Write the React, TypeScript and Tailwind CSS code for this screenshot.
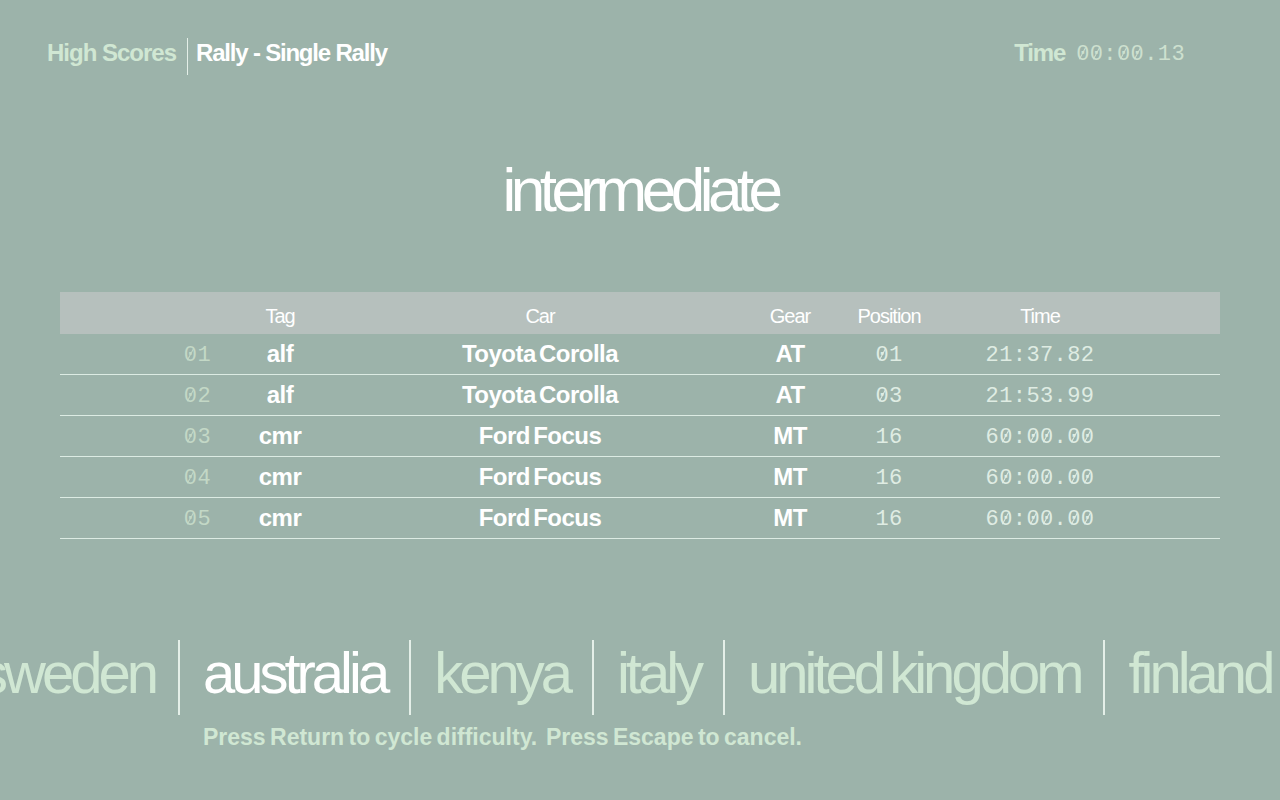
import React from "react";

const sans = { fontFamily: '"Liberation Sans", Arial, sans-serif' };
const mono = { fontFamily: '"Liberation Mono", "DejaVu Sans Mono", monospace' };

const rows = [
  { n: "01", tag: "alf", car: "Toyota Corolla", gear: "AT", pos: "01", time: "21:37.82" },
  { n: "02", tag: "alf", car: "Toyota Corolla", gear: "AT", pos: "03", time: "21:53.99" },
  { n: "03", tag: "cmr", car: "Ford Focus", gear: "MT", pos: "16", time: "60:00.00" },
  { n: "04", tag: "cmr", car: "Ford Focus", gear: "MT", pos: "16", time: "60:00.00" },
  { n: "05", tag: "cmr", car: "Ford Focus", gear: "MT", pos: "16", time: "60:00.00" },
];

const countries = [
  { name: "sweden", active: false },
  { name: "australia", active: true },
  { name: "kenya", active: false },
  { name: "italy", active: false },
  { name: "united kingdom", active: false },
  { name: "finland", active: false },
];

function Lcd({ text, className }: { text: string; className: string }) {
  return (
    <span className={`relative top-[2px] inline-block leading-none tracking-[0.4px] ${className}`} style={mono}>
      {text.split("").map((ch, i) =>
        ch === "0" ? (
          <span key={i} className="relative inline-block leading-none">
            0
            <span className="absolute left-[50%] top-[44%] w-[13px] -ml-[6.5px] -mt-[0.5px] h-[1.2px] bg-current -rotate-[62deg]" />
          </span>
        ) : (
          <span key={i}>{ch}</span>
        )
      )}
    </span>
  );
}

const grid = "grid grid-cols-[152px_136px_384px_116px_82px_220px_1fr] items-center";

export default function App() {
  return (
    <div className="w-[1280px] h-[800px] bg-[#9cb3aa] overflow-hidden flex flex-col" style={sans}>
      {/* top bar */}
      <div className="mt-[38px] h-[37px] flex items-stretch px-[47px]">
        <div className="flex items-center pb-[7px] text-[24px] font-bold tracking-[-1px] text-[#d0e7d3]">High Scores</div>
        <div className="w-[1px] bg-[#e4efe8] ml-[11px] mr-[8px]" />
        <div className="flex items-center pb-[7px] text-[24px] font-bold tracking-[-1.2px] text-white">Rally - Single Rally</div>
        <div className="flex-1" />
        <div className="flex items-center pb-[7px] mr-[48px]">
          <span className="text-[24px] font-bold tracking-[-1.2px] text-[#d0e7d3]">Time</span>
          <Lcd text="00:00.13" className="ml-[11px] text-[22px] text-[#cde0cf]" />
        </div>
      </div>

      {/* title */}
      <div className="mt-[84px] h-[62px] leading-[62px] text-center text-white text-[62px] tracking-[-5.5px]">
        intermediate
      </div>

      {/* table */}
      <div className="mt-[71px] mx-[60px]">
        <div className={`${grid} h-[42px] bg-[#b6c0bd] text-white text-[20px] tracking-[-1px] pt-[6px]`}>
          <div />
          <div className="text-center">Tag</div>
          <div className="text-center">Car</div>
          <div className="text-center">Gear</div>
          <div className="text-center">Position</div>
          <div className="text-center">Time</div>
          <div />
        </div>
        {rows.map((r) => (
          <div key={r.n} className={`${grid} h-[41px] border-b border-[#dcebe3]`}>
            <div className="text-right pr-[1px]">
              <Lcd text={r.n} className="text-[22px] text-[#c3d8c6]" />
            </div>
            <div className="text-center text-[24px] font-bold tracking-[-0.5px] text-white">{r.tag}</div>
            <div className="text-center text-[24px] font-bold tracking-[-0.5px] [word-spacing:-3px] text-white">{r.car}</div>
            <div className="text-center text-[24px] font-bold tracking-[-0.5px] text-white">{r.gear}</div>
            <div className="text-center">
              <Lcd text={r.pos} className="text-[22px] text-[#dfece3]" />
            </div>
            <div className="text-center">
              <Lcd text={r.time} className="text-[22px] text-[#dfece3]" />
            </div>
            <div />
          </div>
        ))}
      </div>

      {/* countries */}
      <div className="mt-[101px] h-[75px] flex items-stretch ml-[-21px] whitespace-nowrap">
        {countries.map((c, i) => (
          <React.Fragment key={c.name}>
            {i > 0 && <div className="w-[2px] bg-[#e4efe8] mx-[23px] shrink-0" />}
            <div
              className={`text-[58px] leading-[58px] pt-[4px] tracking-[-4px] [word-spacing:-5px] shrink-0 ${
                c.active ? "text-white" : "text-[#d0e7d3]"
              }`}
            >
              {c.name}
            </div>
          </React.Fragment>
        ))}
      </div>

      <div className="mt-[5px] ml-[203px] text-[23px] font-bold tracking-[0px] [word-spacing:-2px] text-[#d0e7d3] whitespace-pre">
        Press Return to cycle difficulty.  Press Escape to cancel.
      </div>
    </div>
  );
}
